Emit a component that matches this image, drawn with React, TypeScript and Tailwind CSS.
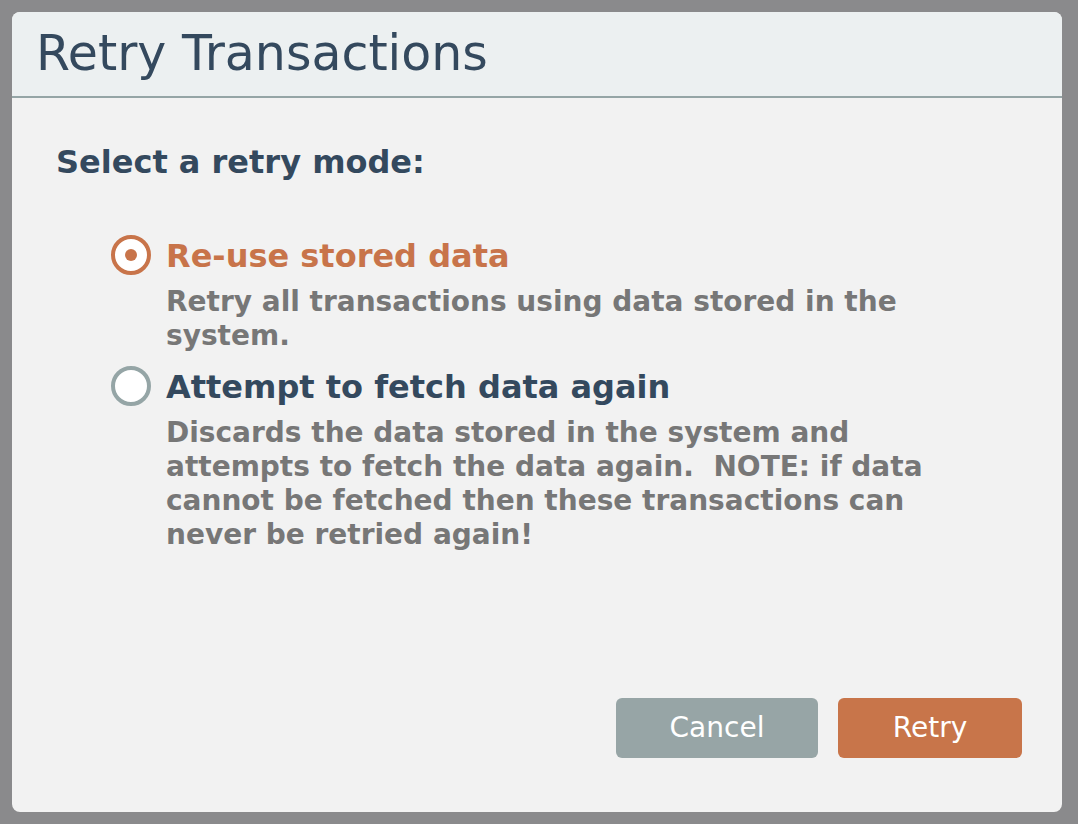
import { useState } from 'react';

type Mode = 'reuse' | 'refetch';

const options: { id: Mode; label: string; description: string }[] = [
  {
    id: 'reuse',
    label: 'Re-use stored data',
    description: 'Retry all transactions using data stored in the system.',
  },
  {
    id: 'refetch',
    label: 'Attempt to fetch data again',
    description:
      'Discards the data stored in the system and attempts to fetch the data again.  NOTE: if data cannot be fetched then these transactions can never be retried again!',
  },
];

function Radio({ checked }: { checked: boolean }) {
  return (
    <span
      className={`flex h-[40px] w-[40px] shrink-0 items-center justify-center rounded-full border-4 bg-white ${
        checked ? 'border-[#c8744a]' : 'border-[#95a5a6]'
      }`}
    >
      {checked && <span className="h-[12px] w-[12px] rounded-full bg-[#c8744a]" />}
    </span>
  );
}

export default function App() {
  const [mode, setMode] = useState<Mode>('reuse');

  return (
    <div className="min-h-screen bg-[#8a8a8c] pt-3 pl-3 font-['DejaVu_Sans',Verdana,sans-serif]">
      <div className="flex h-[800px] w-[1050px] flex-col overflow-hidden rounded-[8px] bg-[#f2f2f2]">
        {/* Header */}
        <header className="h-[86px] border-b-2 border-[#95a5a6] bg-[#ecf0f1] pl-[24px] pt-[14px]">
          <h1 className="text-[49px] leading-[56px] text-[#34495e]">Retry Transactions</h1>
        </header>

        {/* Body */}
        <div className="pl-[44px] pt-[44px]">
          <h2 className="text-[32px] font-bold leading-[40px] text-[#34495e]">Select a retry mode:</h2>

          <div className="ml-[55px] mt-[54px] flex flex-col gap-[14px]">
            {options.map((opt) => {
              const checked = mode === opt.id;
              return (
                <label key={opt.id} className="flex cursor-pointer gap-[15px]" onClick={() => setMode(opt.id)}>
                  <div className="-mt-[1px]">
                    <Radio checked={checked} />
                  </div>
                  <div className="flex flex-col">
                    <span
                      className={`text-[32px] font-bold leading-[40px] ${
                        checked ? 'text-[#c8744a]' : 'text-[#34495e]'
                      }`}
                    >
                      {opt.label}
                    </span>
                    <p className="mt-[9px] w-[800px] whitespace-pre-wrap text-[28px] font-bold leading-[34px] text-[#777777]">
                      {opt.description}
                    </p>
                  </div>
                </label>
              );
            })}
          </div>
        </div>

        {/* Footer */}
        <div className="mt-auto flex justify-end gap-5 pb-[54px] pr-[40px]">
          <button className="h-[60px] w-[202px] rounded-[6px] bg-[#97a5a6] text-[28px] text-white">Cancel</button>
          <button className="h-[60px] w-[184px] rounded-[6px] bg-[#c8754a] text-[28px] text-white">Retry</button>
        </div>
      </div>
    </div>
  );
}
